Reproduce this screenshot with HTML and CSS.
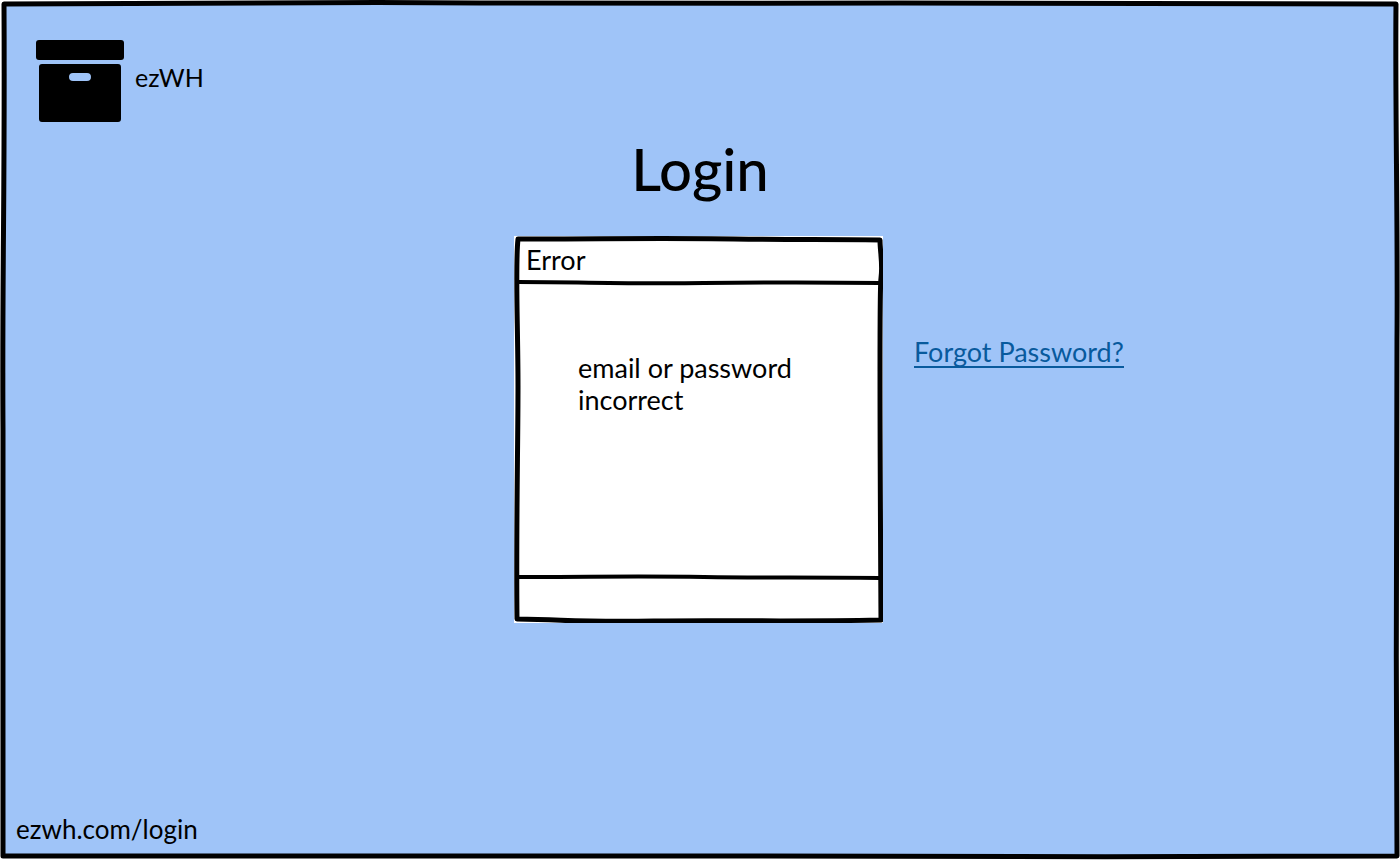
FILE: index.html
```html
<!DOCTYPE html>
<html lang="en">
<head>
<meta charset="utf-8">
<meta name="viewport" content="width=device-width, initial-scale=1">
<title>ezWH Login</title>
<link rel="stylesheet" href="styles.css">
</head>
<body>
<div class="screen">
  <svg class="sketch" viewBox="0 0 1400 860" preserveAspectRatio="none" aria-hidden="true">
    <path class="sketch-paper" d="M0 0H1400V860H0Z M4 3V856H1397V4Z"/>
    <path class="sketch-line" d="M4 4C200 3 330 2 480 3S760 3 900 3S1210 4 1396 4C1395 110 1398 220 1397 340S1396 690 1397 856C1180 857 980 857 760 856S290 857 3 856C2 700 4 590 3 430S5 200 4 4Z"/>
  </svg>
  <header class="brand">
    <svg class="brand-icon" viewBox="0 0 90 84" aria-hidden="true">
      <rect x="1" y="1" width="88" height="20" rx="3"/>
      <path fill-rule="evenodd" d="M7 25H83Q86 25 86 28V80Q86 83 83 83H7Q4 83 4 80V28Q4 25 7 25ZM38 34A4 4 0 0 0 38 42H52A4 4 0 0 0 52 34Z"/>
    </svg>
    <span class="brand-name">ezWH</span>
  </header>
  <h1 class="title">Login</h1>
  <main class="content">
    <section class="dialog" role="alertdialog" aria-labelledby="dialog-title" aria-describedby="dialog-text">
      <svg class="sketch" viewBox="0 0 369 387" preserveAspectRatio="none" aria-hidden="true">
        <path class="sketch-line" d="M4 3C90 3 150 2 220 3S310 3 366 4C366 16 369 28 367 42S366 210 367 384C270 386 220 384 140 385S60 384 3 383C2 290 4 210 4 150S1 30 4 3Z"/>
        <path class="sketch-line sketch-rule" d="M4 46C70 46 110 48 190 47S300 46 366 47M4 341C80 341 120 340 190 341S290 341 366 342"/>
      </svg>
      <h2 class="dialog-title" id="dialog-title">Error</h2>
      <p class="dialog-text" id="dialog-text">email or password incorrect</p>
      <div class="dialog-footer"></div>
    </section>
    <a class="forgot" href="#forgot">Forgot Password?</a>
  </main>
  <footer class="address">ezwh.com/login</footer>
</div>
</body>
</html>
```
FILE: styles.css
```css
* {
  box-sizing: border-box;
}

body {
  margin: 0;
  background: #fff;
  color: #000;
  font-family: Lato, "Open Sans", sans-serif;
  font-size: 27px;
  line-height: 32px;
}

.screen {
  position: relative;
  display: flex;
  flex-direction: column;
  min-height: 100vh;
  padding: 39px 16px 15px;
  background: #9fc4f8;
}

.sketch {
  position: absolute;
  inset: 0;
  width: 100%;
  height: 100%;
  pointer-events: none;
}

.sketch-line {
  fill: none;
  stroke: #000;
  stroke-width: 5px;
  stroke-linejoin: round;
  vector-effect: non-scaling-stroke;
}

.sketch-rule {
  stroke-width: 4px;
}

.sketch-paper {
  fill: #fff;
  fill-rule: evenodd;
}

.brand {
  display: flex;
  align-items: center;
  gap: 10px;
  padding-left: 19px;
}

.brand-icon {
  width: 90px;
  height: 84px;
}

.brand-name {
  padding-bottom: 8px;
  font-size: 25px;
}

.title {
  margin: 14px 0 35px;
  font-size: 58px;
  font-weight: 500;
  line-height: 64px;
  text-align: center;
}

.content {
  display: grid;
  grid-template-columns: 1fr 369px 1fr;
  column-gap: 31px;
  padding-right: 3px;
}

.dialog {
  position: relative;
  grid-column: 2;
  display: flex;
  flex-direction: column;
  min-height: 387px;
  background: #fff;
}

.dialog-title {
  margin: 0;
  padding: 8px 12px 6px;
  font-size: 27px;
  font-weight: 400;
}

.dialog-text {
  flex: 1;
  margin: 0;
  padding: 70px 64px 0;
}

.dialog-footer {
  height: 46px;
}

.forgot {
  justify-self: start;
  align-self: start;
  margin-top: 101px;
  border-bottom: 2px solid #085a9d;
  color: #085a9d;
  line-height: 29px;
  text-decoration: none;
}

.address {
  margin-top: auto;
  font-size: 26px;
}
```
